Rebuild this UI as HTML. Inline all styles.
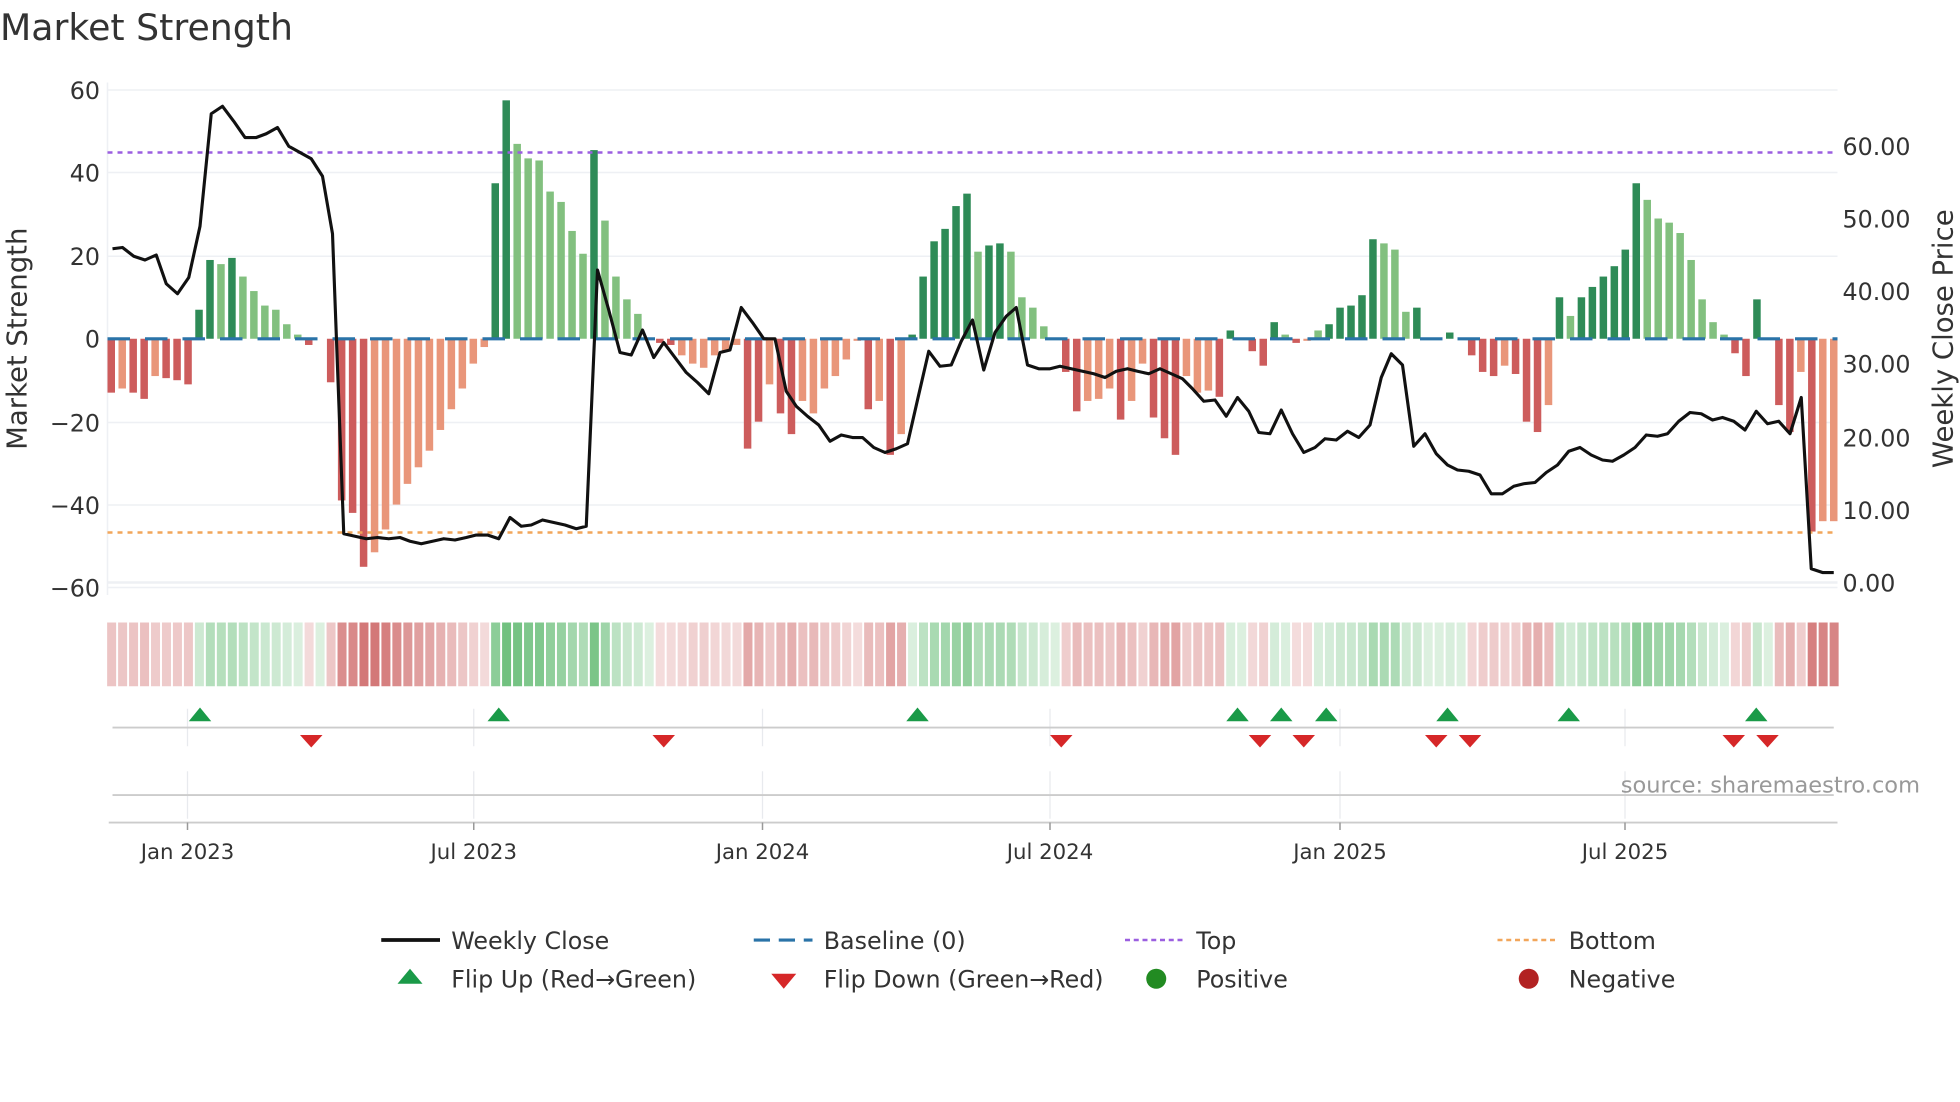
<!DOCTYPE html>
<html><head><meta charset="utf-8"><style>
html,body{margin:0;padding:0;background:#fff;}
svg{display:block;font-family:"DejaVu Sans","Liberation Sans",sans-serif;}
</style></head><body>
<svg id="s" width="1960" height="1102" viewBox="0 0 1568 881.6" xmlns="http://www.w3.org/2000/svg">
<rect width="1568" height="882" fill="#fff"/>
<text x="0" y="32" font-size="29" fill="#333">Market Strength</text>
<g stroke="#eef0f4" stroke-width="1.2">
<line x1="86" x2="1470" y1="72" y2="72"/><line x1="86" x2="1470" y1="138" y2="138"/><line x1="86" x2="1470" y1="205" y2="205"/><line x1="86" x2="1470" y1="338" y2="338"/><line x1="86" x2="1470" y1="404" y2="404"/>
<line x1="86" x2="1470" y1="466" y2="466" stroke-width="2"/><line x1="86" x2="1470" y1="470" y2="470"/>
<line x1="86" x2="86" y1="66" y2="476"/>
</g>
<g font-size="19" fill="#333" text-anchor="end">
<text x="80" y="79">60</text><text x="80" y="145">40</text><text x="80" y="212">20</text><text x="80" y="278">0</text><text x="80" y="345">−20</text><text x="80" y="411">−40</text><text x="80" y="477">−60</text>
</g>
<g font-size="19" fill="#333">
<text x="1474" y="124">60.00</text><text x="1474" y="182">50.00</text><text x="1474" y="240">40.00</text><text x="1474" y="298">30.00</text><text x="1474" y="357">20.00</text><text x="1474" y="415">10.00</text><text x="1474" y="473">0.00</text>
</g>
<text transform="translate(21,271) rotate(-90)" font-size="22" fill="#333" text-anchor="middle">Market Strength</text>
<text transform="translate(1562,271) rotate(-90)" font-size="22" fill="#333" text-anchor="middle">Weekly Close Price</text>
<g id="bars"></g>
<line x1="86" x2="1470" y1="271" y2="271" stroke="#2a73a8" stroke-width="2.5" stroke-dasharray="18,12"/>
<line x1="86" x2="1470" y1="122" y2="122" stroke="#9b5fe0" stroke-width="2" stroke-dasharray="4,4"/>
<line x1="86" x2="1470" y1="426" y2="426" stroke="#f2a65a" stroke-width="2" stroke-dasharray="4,4"/>
<polyline id="price" fill="none" stroke="#111" stroke-width="2.5" stroke-linejoin="round"/>
<g id="strip"></g>
<g stroke="#e8eaee" stroke-width="1">
<line x1="150" x2="150" y1="567" y2="597"/><line x1="379" x2="379" y1="567" y2="597"/><line x1="610" x2="610" y1="567" y2="597"/><line x1="840" x2="840" y1="567" y2="597"/><line x1="1072" x2="1072" y1="567" y2="597"/><line x1="1300" x2="1300" y1="567" y2="597"/>
<line x1="150" x2="150" y1="617" y2="655"/><line x1="379" x2="379" y1="617" y2="655"/><line x1="610" x2="610" y1="617" y2="655"/><line x1="840" x2="840" y1="617" y2="655"/><line x1="1072" x2="1072" y1="617" y2="655"/><line x1="1300" x2="1300" y1="617" y2="655"/>
</g>
<line x1="90" x2="1467" y1="582" y2="582" stroke="#ccc" stroke-width="1.5"/>
<line x1="90" x2="1467" y1="636" y2="636" stroke="#ccc" stroke-width="1.5"/>
<line x1="87" x2="1470" y1="658" y2="658" stroke="#ccc" stroke-width="1.5"/>
<g stroke="#999" stroke-width="1.2">
<line x1="150" x2="150" y1="658" y2="664"/><line x1="379" x2="379" y1="658" y2="664"/><line x1="610" x2="610" y1="658" y2="664"/><line x1="840" x2="840" y1="658" y2="664"/><line x1="1072" x2="1072" y1="658" y2="664"/><line x1="1300" x2="1300" y1="658" y2="664"/>
</g>
<g id="marks"></g>
<g font-size="17" fill="#333" text-anchor="middle">
<text x="150" y="687">Jan 2023</text><text x="379" y="687">Jul 2023</text><text x="610" y="687">Jan 2024</text><text x="840" y="687">Jul 2024</text><text x="1072" y="687">Jan 2025</text><text x="1300" y="687">Jul 2025</text>
</g>
<text x="1536" y="634" font-size="18" fill="#999" text-anchor="end">source: sharemaestro.com</text>
<g font-size="19" fill="#333">
<line x1="305" x2="352" y1="752" y2="752" stroke="#111" stroke-width="3"/>
<text x="361" y="759">Weekly Close</text>
<line x1="603" x2="650" y1="752" y2="752" stroke="#2a73a8" stroke-width="2.5" stroke-dasharray="13,7"/>
<text x="659" y="759">Baseline (0)</text>
<line x1="900" x2="946" y1="752" y2="752" stroke="#9b5fe0" stroke-width="2" stroke-dasharray="4,3"/>
<text x="957" y="759">Top</text>
<line x1="1198" x2="1244" y1="752" y2="752" stroke="#f2a65a" stroke-width="2" stroke-dasharray="4,3"/>
<text x="1255" y="759">Bottom</text>
<polygon points="328,775 338,787 318,787" fill="#1a9a48"/>
<text x="361" y="790">Flip Up (Red→Green)</text>
<polygon points="617,779 637,779 627,791" fill="#d62728"/>
<text x="659" y="790">Flip Down (Green→Red)</text>
<circle cx="925" cy="783" r="8" fill="#228b22"/>
<text x="957" y="790">Positive</text>
<circle cx="1223" cy="783" r="8" fill="#b22222"/>
<text x="1255" y="790">Negative</text>
</g>
</svg>
<script>
(function(){
var V=[[-13,1],[-12,0],[-13,1],[-14.5,1],[-9,0],[-9.5,1],[-10,1],[-11,1],[7,1],[19,1],[18,0],[19.5,1],[15,0],[11.5,0],[8,0],[7,0],[3.5,0],[1,0],[-1.5,1],[0,0],[-10.5,1],[-39,1],[-42,1],[-55,1],[-51.5,0],[-46,0],[-40,0],[-35,0],[-31,0],[-27,0],[-22,0],[-17,0],[-12,0],[-6,0],[-2,0],[37.5,1],[57.5,1],[47,0],[43.5,0],[43,0],[35.5,0],[33,0],[26,0],[20.5,0],[45.5,1],[28.5,0],[15,0],[9.5,0],[6,0],[0,0],[-1,1],[-1.5,1],[-4,0],[-6,0],[-7,0],[-4,0],[-3,0],[-1.5,0],[-26.5,1],[-20,1],[-11,0],[-18,1],[-23,1],[-15,0],[-18,0],[-12,0],[-9,0],[-5,0],[-0.5,0],[-17,1],[-15,0],[-28,1],[-23,0],[1,1],[15,1],[23.5,1],[26.5,1],[32,1],[35,1],[21,0],[22.5,1],[23,1],[21,0],[10,0],[7.5,0],[3,0],[0,0],[-8,1],[-17.5,1],[-15,0],[-14.5,0],[-12,0],[-19.5,1],[-15,0],[-6,0],[-19,1],[-24,1],[-28,1],[-9,0],[-13,0],[-12.5,0],[-14,1],[2,1],[0,0],[-3,1],[-6.5,1],[4,1],[1,0],[-1,1],[-0.5,0],[2,0],[3.5,1],[7.5,1],[8,1],[10.5,1],[24,1],[23,0],[21.5,0],[6.5,0],[7.5,1],[0,0],[0,0],[1.5,1],[0,0],[-4,1],[-8,1],[-9,1],[-6.5,0],[-8.5,1],[-20,1],[-22.5,1],[-16,0],[10,1],[5.5,0],[10,1],[12.5,1],[15,1],[17.5,1],[21.5,1],[37.5,1],[33.5,0],[29,0],[28,0],[25.5,0],[19,0],[9.5,0],[4,0],[1,0],[-3.5,1],[-9,1],[9.5,1],[0,0],[-16,1],[-22.5,1],[-8,0],[-46.5,1],[-44,0],[-44,0]];
var P=[[90,199],[98,198],[107,205],[116,208],[125,204],[133,227],[142,235],[151,222],[160,181],[169,91],[178,85],[187,97],[196,110],[205,110],[213,107],[222,102],[231,117],[240,122],[249,127],[258,141],[266,187],[275,427],[284,429],[293,431],[302,430],[311,431],[320,430],[328,433],[337,435],[346,433],[355,431],[364,432],[373,430],[381,428],[390,428],[399,431],[408,414],[417,421],[425,420],[434,416],[443,418],[452,420],[461,423],[469,421],[478,216],[487,248],[496,282],[505,284],[514,264],[523,286],[531,274],[540,286],[549,298],[558,306],[567,315],[576,282],[584,280],[593,246],[602,258],[611,271],[620,271],[629,313],[637,325],[646,333],[655,340],[664,353],[673,348],[682,350],[690,350],[699,358],[708,362],[717,359],[726,355],[734,320],[743,281],[752,293],[761,292],[769,273],[778,256],[787,296],[796,266],[805,253],[813,246],[822,292],[831,295],[840,295],[848,293],[857,295],[866,297],[875,299],[884,302],[893,297],[902,295],[910,297],[919,299],[928,295],[937,299],[946,303],[954,311],[963,321],[972,320],[981,333],[990,318],[999,329],[1007,346],[1016,347],[1025,328],[1034,347],[1043,362],[1052,358],[1060,351],[1069,352],[1078,345],[1087,350],[1096,340],[1105,302],[1113,283],[1122,292],[1131,357],[1140,347],[1149,363],[1158,372],[1166,376],[1175,377],[1184,380],[1193,395],[1202,395],[1211,389],[1219,387],[1228,386],[1237,378],[1246,372],[1255,361],[1264,358],[1273,364],[1282,368],[1290,369],[1299,364],[1308,358],[1317,348],[1326,349],[1334,347],[1343,337],[1352,330],[1361,331],[1370,336],[1378,334],[1387,337],[1396,344],[1405,329],[1414,339],[1423,337],[1432,347],[1441,318],[1449,455],[1458,458],[1467,458]];
var NS="http://www.w3.org/2000/svg";
function el(t,a,p){var e=document.createElementNS(NS,t);for(var k in a)e.setAttribute(k,a[k]);p.appendChild(e);return e;}
var bars=document.getElementById('bars'),strip=document.getElementById('strip'),n=V.length,dx=(1467-89)/(n-1);
for(var i=0;i<n;i++){var v=V[i][0],d=V[i][1],x=89+i*dx;
 if(v!==0){var yy=271-3.317*v,yt=Math.min(yy,271),h=Math.abs(yy-271);
  var c=v>0?(d?'#2e8b57':'#82c07f'):(d?'#cd5c5c':'#e9967a');
  el('rect',{x:(x-3).toFixed(2),y:yt.toFixed(2),width:6,height:h.toFixed(2),fill:c},bars);}
 var a=0.18+0.55*Math.min(Math.abs(v),50)/50;
 var sc=v>=0?'rgba(60,170,80,'+a.toFixed(2)+')':'rgba(195,70,70,'+a.toFixed(2)+')';
 el('rect',{x:(x-3.3).toFixed(2),y:498,width:7.2,height:51,fill:sc},strip);}
document.getElementById('price').setAttribute('points',P.map(function(p){return p.join(',')}).join(' '));
var m=document.getElementById('marks');
[160,399,734,990,1025,1061,1158,1255,1405].forEach(function(x){el('polygon',{points:(x)+',566 '+(x+9)+',577 '+(x-9)+',577',fill:'#1a9a48'},m);});
[249,531,849,1008,1043,1149,1176,1387,1414].forEach(function(x){el('polygon',{points:(x-9)+',588 '+(x+9)+',588 '+x+',598',fill:'#d62728'},m);});
})();
</script>
</body></html>
